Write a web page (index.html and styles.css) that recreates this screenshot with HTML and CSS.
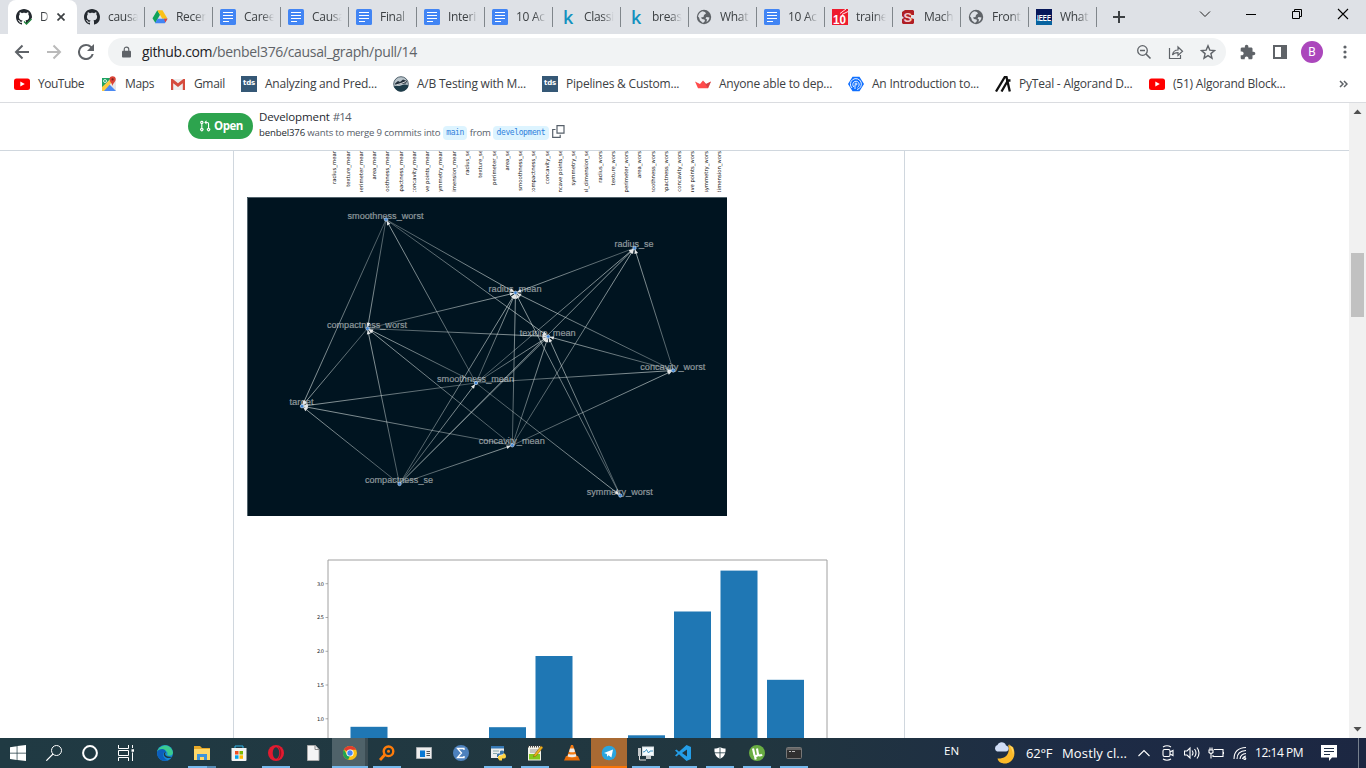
FILE: index.html
```html
<!DOCTYPE html>
<html lang="en">
<head>
<meta charset="utf-8">
<title>Development #14</title>
<link rel="stylesheet" href="styles.css">
</head>
<body>
<svg class="sprite" xmlns="http://www.w3.org/2000/svg">
  <symbol id="github" viewBox="0 0 16 16"><path fill="#24292f" d="M8 0C3.58 0 0 3.58 0 8c0 3.54 2.29 6.53 5.47 7.59.4.07.55-.17.55-.38 0-.19-.01-.82-.01-1.49-2.01.37-2.53-.49-2.69-.94-.09-.23-.48-.94-.82-1.13-.28-.15-.68-.52-.01-.53.63-.01 1.08.58 1.23.82.72 1.21 1.87.87 2.33.66.07-.52.28-.87.51-1.07-1.78-.2-3.64-.89-3.64-3.95 0-.87.31-1.59.82-2.15-.08-.2-.36-1.02.08-2.12 0 0 .67-.21 2.2.82.64-.18 1.32-.27 2-.27.68 0 1.36.09 2 .27 1.53-1.04 2.2-.82 2.2-.82.44 1.1.16 1.92.08 2.12.51.56.82 1.27.82 2.15 0 3.07-1.87 3.75-3.65 3.95.29.25.54.73.54 1.48 0 1.07-.01 1.93-.01 2.2 0 .21.15.46.55.38A8.013 8.013 0 0016 8c0-4.42-3.58-8-8-8z"/></symbol>
  <symbol id="drive" viewBox="0 0 16 16"><path fill="#10a35a" d="M5.3 1.2 8 5.8 3.4 14 .5 9.3z"/><path fill="#fbc116" d="M5.3 1.2h5.2l5 8.6h-5.2z"/><path fill="#4285f4" d="M5.6 9.8h9.9l-2.7 4.4H3z"/><path fill="#ea4335" d="M12 9.8h3.5l-2.2 3.7z"/></symbol>
  <symbol id="doc" viewBox="0 0 16 16"><rect width="16" height="16" rx="1.500" fill="#4285f4"/><path d="M3 3.500h10M3 6.500h10M3 9.500h10M3 12.500h6" stroke="#fff" stroke-width="1.200"/></symbol>
  <symbol id="globe" viewBox="0 0 16 16"><circle cx="8" cy="8" r="7.200" fill="#5f6368"/><path d="M2 7.500C2.500 5 4 3 6.500 2.200L9 3l1 1.500-2 1.500-.5 2-2.500.5 1 1.500 2.500.5L9 12l-2 2-3-2.500-1-3zM10.500 8l3 .5c-.3 2-1.500 3.500-3 4.500l.5-2.500-1.500-1z" fill="#dee1e6"/></symbol>
  <symbol id="youtube" viewBox="0 0 16 16"><rect y="2.500" width="16" height="11.500" rx="2.500" fill="#f00"/><path d="M6.300 5.500v5l4.500-2.500z" fill="#fff"/></symbol>
  <symbol id="maps" viewBox="0 0 16 16"><path d="M1 2h14v13H1z" fill="#e8e8e8"/><path d="M1 2h9L1 12z" fill="#1ea362"/><path d="M1 15 8 8l7 7z" fill="#4a89f3"/><path d="M1 11 10 3l2 2L3 15H1z" fill="#fcca3f"/><circle cx="4" cy="5" r="1.500" fill="none" stroke="#fff" stroke-width=".8"/><path d="M11.500 10C11 7 8.500 6 8.500 3.300a3.100 3.100 0 0 1 6.200 0C14.700 6 12 7 11.500 10z" fill="#db4437"/><circle cx="11.600" cy="3.400" r="1.100" fill="#7b231e"/></symbol>
  <symbol id="gmail" viewBox="0 0 16 16"><path d="M1 3h14v11H1z" fill="#eee"/><path d="M1 3v11h2.200V7.200L8 11l4.800-3.800V14H15V3h-1.700L8 7.200 2.700 3z" fill="#d54b3d"/></symbol>
  <symbol id="abtest" viewBox="0 0 16 16"><circle cx="8" cy="8" r="7.300" fill="#b9c4ca" stroke="#53646f"/><path d="M.8 10.500C4 9 5 11 8 9.500s5-1 7.500 0A7.600 7.600 0 0 1 1.800 12z" fill="#1d3c49"/><path d="M2 7.500 5 5l2 1 3-2.500 4 1.500-1 2.500-5 .5-5 1.500z" fill="#24313c"/><path d="m3 9 5-1.500 5-2" stroke="#fff" fill="none" stroke-width=".8"/></symbol>
  <symbol id="streamlit" viewBox="0 0 16 16"><path d="M0 5.500 5 8l3-3.500L11 8l5-2.500-3 6.800H3z" fill="#ff4b4b"/><path d="m8 4.500 3 3.500 5-2.500-3 6.800z" fill="#bd4043" opacity=".7"/></symbol>
  <symbol id="ocean" viewBox="0 0 16 16"><path d="M4.500.7h7L16 8l-4.500 7.300h-7L0 8z" fill="#0f6fff"/><g fill="none" stroke="#fff" stroke-width=".9"><path d="M4 12a5.500 5.500 0 1 1 5 1.500M6 11a3.200 3.200 0 1 1 3.500.3M7 13V9"/><circle cx="8" cy="8" r="1"/></g></symbol>
  <symbol id="algo" viewBox="0 0 16 16"><path d="M1 15.500 9.800 1h1.700l3.300 14.500M6.500 15.500 12 6M15.500 4.500H11" stroke="#111" stroke-width="2.300" fill="none"/></symbol>
</svg>

<header class="tabstrip">
  <div class="tab active"><svg class="fav"><use href="#github"/><path d="m7 12 3 3 6-6v7H7z" fill="#fff"/><path d="m8 12.500 2.500 2.500 5-5" stroke="#1a7f37" stroke-width="1.300" fill="none"/></svg><span>D</span><svg class="tabx" viewBox="0 0 8 8"><path d="m.5.5 7 7m0-7-7 7" stroke="#3c4043" stroke-width="1.700"/></svg></div>
  <div class="tab"><svg class="fav"><use href="#github"/></svg><span>causal</span></div>
  <div class="tab"><svg class="fav"><use href="#drive"/></svg><span>Recent</span></div>
  <div class="tab"><svg class="fav"><use href="#doc"/></svg><span>Caree</span></div>
  <div class="tab"><svg class="fav"><use href="#doc"/></svg><span>Causa</span></div>
  <div class="tab"><svg class="fav"><use href="#doc"/></svg><span>Final</span></div>
  <div class="tab"><svg class="fav"><use href="#doc"/></svg><span>Interi</span></div>
  <div class="tab"><svg class="fav"><use href="#doc"/></svg><span>10 Ac</span></div>
  <div class="tab"><i class="fav k">k</i><span>Classi</span></div>
  <div class="tab"><i class="fav k">k</i><span>breas</span></div>
  <div class="tab"><svg class="fav"><use href="#globe"/></svg><span>What</span></div>
  <div class="tab"><svg class="fav"><use href="#doc"/></svg><span>10 Ac</span></div>
  <div class="tab"><svg class="fav" viewBox="0 0 16 16"><rect width="16" height="16" fill="#ee1b2e"/><text x="1" y="14.500" class="ico-ten" textLength="13" lengthAdjust="spacingAndGlyphs">10</text><path d="M8 4.500 14 0M10 5.500l6-3" stroke="#fff" stroke-width=".9"/></svg><span>traine</span></div>
  <div class="tab"><svg class="fav" viewBox="0 0 16 16"><path d="M5 1h8l1 1v4h-3v3l3 1v4l-1 1H3l-1-1v-4l2-1-2-2V3z" fill="#b01e24"/><text x="3.500" y="13" class="ico-s">S</text></svg><span>Mach</span></div>
  <div class="tab"><svg class="fav"><use href="#globe"/></svg><span>Front</span></div>
  <div class="tab"><svg class="fav" viewBox="0 0 16 16"><rect width="16" height="16" fill="#06175a"/><path d="M0 16v-6l16 2v4z" fill="#0863a0"/><text x="1" y="11.500" class="ico-ieee" textLength="14" lengthAdjust="spacingAndGlyphs">IEEE</text></svg><span>What</span></div>
  <svg class="newtab" viewBox="0 0 12 12"><path d="M6 0v12M0 6h12" stroke="#3c4043" stroke-width="2"/></svg>
  <div class="winctl">
    <svg viewBox="0 0 46 28"><path d="m18 11.500 5 5 5-5" fill="none" stroke="#222"/></svg>
    <svg viewBox="0 0 46 28"><path d="M18 14.500h10" stroke="#000"/></svg>
    <svg viewBox="0 0 46 28"><path d="M18.500 11.500h7v7h-7zM20.500 11V9.500h7v7H26" fill="none" stroke="#000"/></svg>
    <svg viewBox="0 0 46 28"><path d="m18 9 10 10m0-10L18 19" stroke="#000" stroke-width="1.100"/></svg>
  </div>
</header>

<nav class="toolbar">
  <svg class="nav" viewBox="0 0 16 16"><path d="M15 8H2m6.500-6.500L2 8l6.500 6.500" fill="none" stroke="#5f6368" stroke-width="2"/></svg>
  <svg class="nav" viewBox="0 0 16 16"><path d="M1 8h13M7.500 1.500 14 8l-6.500 6.500" fill="none" stroke="#bababa" stroke-width="2"/></svg>
  <svg class="nav" viewBox="4 4 16 16"><path fill="#5f6368" d="M17.650 6.350A7.960 7.960 0 0 0 12 4a8 8 0 1 0 7.730 10h-2.080A6 6 0 1 1 12 6c1.660 0 3.140.69 4.220 1.780L13 11h7V4z"/></svg>
  <div class="omnibox">
    <svg class="lock" viewBox="0 0 10 12"><path d="M1 4.500h8q1 0 1 1V11q0 1-1 1H1q-1 0-1-1V5.500q0-1 1-1z" fill="#5f6368"/><path d="M2.500 5V3a2.500 2.500 0 0 1 5 0v2" fill="none" stroke="#5f6368" stroke-width="1.300"/></svg>
    <p class="url"><b>github.com</b>/benbel376/causal_graph/pull/14</p>
    <svg class="omi" viewBox="0 0 16 16"><circle cx="6.500" cy="6.500" r="4.800" fill="none" stroke="#5f6368" stroke-width="1.300"/><path d="M4 6.500h5M10 10l4.500 4.500" stroke="#5f6368" stroke-width="1.600"/></svg>
    <svg class="omi" viewBox="0 0 16 16"><path d="M1.500 4v10.500h11V11M4.500 11C5 7.500 7 6 10 6V3l4.500 4.200L10 11.400V8.700c-3 0-4.500.7-5.500 2.300z" fill="none" stroke="#5f6368" stroke-width="1.200"/></svg>
    <svg class="omi" viewBox="0 0 16 16"><path d="m8 1.800 1.800 4.300 4.700.4-3.600 3.100 1.100 4.600L8 11.700l-4 2.500 1.100-4.600-3.600-3.100 4.700-.4z" fill="none" stroke="#5f6368" stroke-width="1.400"/></svg>
  </div>
  <div class="actions">
    <svg viewBox="1 0 23 23"><path fill="#5f6368" d="M20.500 11H19V7c0-1.100-.9-2-2-2h-4V3.500C13 2.120 11.880 1 10.500 1S8 2.120 8 3.500V5H4c-1.100 0-1.990.9-1.990 2v3.800H3.500c1.490 0 2.700 1.210 2.700 2.700s-1.210 2.700-2.700 2.700H2V20c0 1.100.9 2 2 2h3.800v-1.500c0-1.490 1.210-2.700 2.700-2.700 1.490 0 2.700 1.210 2.700 2.700V22H17c1.100 0 2-.9 2-2v-4h1.500c1.380 0 2.500-1.120 2.500-2.500S21.880 11 20.500 11z"/></svg>
    <svg viewBox="0 0 16 16"><path d="M2 2h12v12H2z" fill="none" stroke="#5f6368" stroke-width="2"/><path d="M9 2h5v12H9z" fill="#5f6368"/></svg>
    <div class="avatar">B</div>
    <svg viewBox="0 0 16 16" fill="#5f6368"><circle cx="8" cy="3" r="1.600"/><circle cx="8" cy="8" r="1.600"/><circle cx="8" cy="13" r="1.600"/></svg>
  </div>
</nav>

<nav class="bookmarks">
  <a class="tight"><svg class="fav"><use href="#youtube"/></svg>YouTube</a>
  <a><svg class="fav"><use href="#maps"/></svg>Maps</a>
  <a><svg class="fav"><use href="#gmail"/></svg>Gmail</a>
  <a><i class="fav tds">tds</i>Analyzing and Pred...</a>
  <a><svg class="fav"><use href="#abtest"/></svg>A/B Testing with M...</a>
  <a><i class="fav tds">tds</i>Pipelines &amp; Custom...</a>
  <a><svg class="fav"><use href="#streamlit"/></svg>Anyone able to dep...</a>
  <a><svg class="fav"><use href="#ocean"/></svg>An Introduction to...</a>
  <a><svg class="fav"><use href="#algo"/></svg>PyTeal - Algorand D...</a>
  <a><svg class="fav"><use href="#youtube"/></svg>(51) Algorand Block...</a>
  <svg class="more" viewBox="0 0 9 8"><path d="m1 1 3 3-3 3m4-6 3 3-3 3" fill="none" stroke="#5f6368" stroke-width="1.500"/></svg>
</nav>

<div class="viewport">
  <main class="page">
    <section class="pr">
      <span class="state"><svg viewBox="0 0 16 16"><path fill="#fff" d="M7.177 3.073L9.573.677A.25.25 0 0110 .854v4.792a.25.25 0 01-.427.177L7.177 3.427a.25.25 0 010-.354zM3.750 2.500a.75.75 0 100 1.500.75.75 0 000-1.500zm-2.250.75a2.250 2.250 0 113 2.122v5.256a2.251 2.251 0 11-1.500 0V5.372A2.250 2.250 0 011.500 3.250zM11 2.500h-1V4h1a1 1 0 011 1v5.628a2.251 2.251 0 101.500 0V5A2.500 2.500 0 0011 2.500zm1 10.250a.75.75 0 111.500 0 .75.75 0 01-1.500 0zM3.750 12a.75.75 0 100 1.500.75.75 0 000-1.500z"/></svg>Open</span>
      <div class="pr-text">
        <h1>Development <span>#14</span></h1>
        <p><b>benbel376</b> wants to merge 9 commits into <code>main</code> from <code>development</code><svg class="copy" viewBox="0 0 13 13"><path d="M5 .7h7v7.500H5zM3.500 4.500H.7v7.800h7.500v-2.500" fill="none" stroke="#57606a" stroke-width="1.200"/></svg></p>
      </div>
    </section>
    <section class="comment">
      <svg class="heat" id="heat" viewBox="247 151 480 41"></svg>
      <svg class="graph" id="graph" viewBox="247 197 480 319"></svg>
      <svg class="chart" id="chart" viewBox="247 550 600 188"></svg>
    </section>
  </main>
  <aside class="scroll"><svg viewBox="0 0 17 17"><path d="m4.500 11 4-4.500 4 4.500z" fill="#505050"/></svg><i></i><svg viewBox="0 0 17 17"><path d="m4.500 6 4 4.500 4-4.500z" fill="#505050"/></svg></aside>
</div>

<footer class="taskbar">
  <div class="sys">
    <svg viewBox="0 0 16 16" fill="#fff"><path d="m0 2.200 6.700-1v6.500H0zM7.400 1.100 16 0v7.700H7.400zM0 8.400h6.700v6.500l-6.700-1zM7.400 8.400H16V16l-8.600-1.100z"/></svg>
    <svg viewBox="0 0 16 16" fill="none" stroke="#fff"><circle cx="10.500" cy="5.500" r="5"/><path d="M7 9 .3 15.700" stroke-width="1.200"/></svg>
    <svg viewBox="0 0 16 16"><circle cx="8" cy="8" r="6.900" fill="none" stroke="#fff" stroke-width="2"/></svg>
    <svg viewBox="0 0 16 16" fill="none" stroke="#fff"><path d="M.5 0v3.500h10V0M.5 16v-3.500h10V16M.5 5.500h10v5H.5zM14.500 0v3M14.500 7.500V16"/><path d="M13.500 5.500h2.500" stroke-width="2.500"/></svg>
  </div>
  <div class="apps">
    <div><svg viewBox="0 0 16 16"><circle cx="8" cy="8" r="8" fill="#1689d8"/><path d="M.2 6.500C2-.5 14-3 16 7.500c0 3.500-4.500 4-6 2.500 2-3-2-7-9.800-3.500z" fill="#3acb91"/><path d="M.2 6.500C3 3 8.500 3.500 9 7 5 6.500 4.500 13 11 15.400 4 17.500-.6 12 .2 6.500z" fill="#0c5ebc"/><path d="M9 7c-2 2-1 5 6 5-1 1-6 2.200-8-1.500C6 8 8 6.500 9 7z" fill="#203a43"/></svg></div>
    <div class="on wide"><svg viewBox="0 0 16 16"><path d="M0 1h6l2 2h8v12H0z" fill="#e7a928"/><path d="M0 4h16v11H0z" fill="#ffd868"/><path d="M3 15V9h10v6h-3v-3H6v3z" fill="#3f94da"/></svg></div>
    <div><svg viewBox="0 0 16 16"><path d="M4 4V1h8v3" fill="none" stroke="#32b5e8"/><path d="M.5 3h15v12q0 1-1 1h-13q-1 0-1-1z" fill="#f3f3f3"/><path d="M4 6h3.500v3.500H4z" fill="#f04f23"/><path d="M8.500 6H12v3.500H8.500z" fill="#7eb900"/><path d="M4 10.300h3.500v3.500H4z" fill="#00a3ee"/><path d="M8.500 10.300H12v3.500H8.500z" fill="#ffb800"/></svg></div>
    <div class="on"><svg viewBox="0 0 16 16"><circle cx="8" cy="8" r="8" fill="#e21b30"/><ellipse cx="8" cy="8" rx="3.300" ry="5.800" fill="#203a43"/><path d="M10 1.500a8 8 0 0 1 0 13 12 12 0 0 0 0-13z" fill="#a20d20"/></svg></div>
    <div><svg viewBox="0 0 16 16"><path d="M2.500.5h8l3.500 4v11H2.500z" fill="#f5f5f5" stroke="#aaa"/><path d="M10 .5v4h4" fill="none" stroke="#888"/></svg></div>
    <div class="on current"><svg viewBox="0 0 16 16"><circle cx="8" cy="8" r="7" fill="#fbc116"/><path d="M8 8 1.900 4.600A7 7 0 0 1 14.200 4.700H8z" fill="#e33b2e"/><path d="M1.900 4.600 5 10l3 1-2 3.800A7 7 0 0 1 1.900 4.600z" fill="#1fa352"/><circle cx="8" cy="8" r="3.600" fill="#fff"/><circle cx="8" cy="8" r="2.700" fill="#4285f4"/></svg></div>
    <div class="on"><svg viewBox="0 0 16 16"><g fill="none" stroke="#ff7c0a"><circle cx="9.500" cy="6.300" r="4.800" stroke-width="2.400"/><path d="m6 9.500-5 5.500" stroke-width="2.800"/></g><circle cx="9.500" cy="6.300" r="1.500" fill="#ff7c0a"/></svg></div>
    <div><svg viewBox="0 0 16 16"><path d="M.5 2.500h15v11H.5z" fill="#eee" stroke="#a9afb3"/><path d="M4 5.500h5v6.500H4z" fill="#0878d4"/><path d="M10.500 6.500h3.500m-3.500 2h3.500m-3.500 2h3.500" stroke="#555"/></svg></div>
    <div><svg viewBox="0 0 16 16"><circle cx="8" cy="8" r="8" fill="#4d81bd"/><path d="M11 5V3.500H4.500L8.500 8l-4 4.500H11V11" fill="none" stroke="#fff" stroke-width="1.300"/></svg></div>
    <div class="on"><svg viewBox="0 0 16 16"><path d="M1 1h13v12H1z" fill="#eee"/><path d="M1 1h13v2.500H1z" fill="#3678b4"/><path d="M3 6h6M3 8.500h4" stroke="#8aa"/><path d="M7 12V9.500q0-1 1-1h2V6.500q0-1 2-1t2 1V9l-5 1v2z" fill="#3a75aa"/><path d="M8 13.500V11l5-1V8.500h1.500q1.500 1 1.500 3T14 13.500h-2v2H9.500z" fill="#ffd343"/></svg></div>
    <div class="on"><svg viewBox="0 0 16 16"><path d="M1 1h13v14.500H1z" fill="#f2f2e9"/><path d="M2 9h11v5.500H2z" fill="#85c91e"/><path d="M1 1.500h13" stroke="#444" stroke-dasharray="1 1" stroke-width="2"/><path d="M3 5h8m-8 2h7" stroke="#999"/><path d="m7 10 7-9 2 1.500L9 11l-2.500 1z" fill="#f1b31e" stroke="#875f1b" stroke-width=".6"/></svg></div>
    <div><svg viewBox="0 0 16 16"><path d="M2 11h12l2 4.500H0z" fill="#e66b08"/><path d="M7 0h2l4 12q-5 2-10 0z" fill="#f37b13"/><path d="m6 3.500-1 3.200q3 1 6 0L10 3.500zM4.400 9l-.8 2.500q4.400 1.500 8.800 0L11.600 9q-3.600 1.200-7.200 0z" fill="#eee"/></svg></div>
    <div class="on alert"><svg viewBox="0 0 16 16"><circle cx="8" cy="8" r="7.300" fill="#2ba5de"/><path d="m3 8 9-3.600-1.600 8L7.500 10.200l-1.400 1.500-.2-2.700z" fill="#fff"/></svg></div>
    <div class="on"><svg viewBox="0 0 16 16"><path d="M4 1.500h12v9.500H4z" fill="#d7dde0"/><path d="M5 2.500h10v7.500H5z" fill="#f4fbfe"/><path d="m5 7 2-.5 1.500-2 2 3.500L12 6h3" fill="none" stroke="#197db4" stroke-width=".8"/><path d="M0 3h3v8H0zM8 11h5v3H8z" fill="#c3c7c9"/><path d="M1.500 11v4H8" fill="none" stroke="#ddd"/></svg></div>
    <div class="on"><svg viewBox="0 0 16 16"><path d="M11.500 0 16 2v12l-4.500 2L4 9.300 1.500 11.500 0 10.500 2.700 8 0 5.500l1.500-1L4 6.700zM12 4.500 7 8l5 3.500z" fill="#249ee8"/></svg></div>
    <div class="on"><svg viewBox="0 0 16 16"><path d="M8 2c2 1.300 3.500 1.600 5.500 1.600C14 9 12 12 8 14 4 12 2 9 2.500 3.600 4.500 3.600 6 3.300 8 2z" fill="#fff"/><path d="M8 2v12M2 7.800h12" stroke="#203a43" stroke-width=".8"/></svg></div>
    <div class="on"><svg viewBox="0 0 16 16"><circle cx="8" cy="8" r="8" fill="#69ad43"/><path d="m4 3.500 1.300 6c.5 2.500 4 2 3.500-1L8 3.500m1 5.500c.5 2 2.500 2 4 .5M6 11l.7 3.500" fill="none" stroke="#fff" stroke-width="2.100"/></svg></div>
    <div class="on"><svg viewBox="0 0 16 16"><rect x=".5" y="2.500" width="15" height="11" rx="1" fill="#303030" stroke="#777"/><path d="M1 3h14v2H1z" fill="#666"/><path d="M3 6.500h2m1 0h3" stroke="#bbb"/></svg></div>
  </div>
  <div class="tray">
    <span class="lang">EN</span>
    <svg class="moon" viewBox="0 0 22 22"><path d="M19 5c4 9-1 16.500-8 16.500-4 0-7-2-7.500-5C10 17 17 13 14 3z" fill="#fcb928"/><path d="M14.500 2c5 3 6 7 4.500 11 0-4-2-8-4.500-11z" fill="#ffd967"/><path d="M3 9.500a3.500 3.500 0 0 1 .5-6.500C5-1 11-.5 12 3.500c4 1 3 6 0 6z" fill="#cfdcf5"/></svg>
    <span class="temp">62°F</span><span class="sky">Mostly cl...</span>
    <svg class="ti" viewBox="0 0 16 16"><path d="m2.500 11 5.500-5.500 5.500 5.500"/></svg>
    <svg class="ti" viewBox="0 0 16 16"><rect x="3" y="4.500" width="7" height="7" rx="1.500"/><path d="m10 7 3-1.500v5L10 9M3 2Q7-.5 11 2M3 14q4 2.500 8 0"/></svg>
    <svg class="ti" viewBox="0 0 16 16"><path d="M.5 6v4H3l3 3V3L3 6zM8 5.500q2 2.500 0 5M10.500 4q3 4 0 8M13 2.500q4 5.500 0 11"/></svg>
    <svg class="ti" viewBox="0 0 16 16"><path d="M6 4.500h9v7H5V10M15.500 7v2M1 5h4v2.500q-2 2-4 0zM2 5V2.500M4 5V2.500M3 9v4.500"/></svg>
    <svg class="ti" viewBox="0 0 16 16"><path d="M2 14Q2 3 14 2.500M5 14q0-8 9-8.500M8 14q.5-5 6-5.500M10.500 14q.5-2.500 3.500-3"/><circle cx="12.800" cy="13.500" r="1"/></svg>
    <span class="clock">12:14 PM</span>
    <svg class="note" viewBox="0 0 16 16"><path d="M0 0h16v12.500h-5L8 16v-3.500H0z" fill="#fff"/><path d="M3 3.500h10m-10 3h10m-10 3h6" stroke="#1d2d44"/></svg>
    <i class="peek"></i>
  </div>
</footer>
<script src="figures.js"></script>
</body>
</html>
```

FILE: styles.css
```css
* { box-sizing: border-box; }
body { margin: 0; width: 1366px; height: 768px; overflow: hidden; display: flex; flex-direction: column; font: 12px/16px "Open Sans", "Noto Sans", sans-serif; color: #3c4043; background: #fff; }
svg { display: block; flex: none; }
.sprite { width: 0; height: 0; position: absolute; }
.fav { width: 16px; height: 16px; flex: none; }
.k { font: 600 18px/16px "Open Sans", sans-serif; color: #1391bf; padding-left: 3px; }
.tds { font: bold 7px/15px "DejaVu Sans", sans-serif; letter-spacing: -.2px; color: #fff; background: #355876; text-align: center; }
.ico-ten { font: bold 13px "Liberation Sans", sans-serif; fill: #fff; }
.ico-s { font: bold 13px "Liberation Sans", sans-serif; fill: #f3c9cb; }
.ico-ieee { font: bold 9px "Liberation Sans", sans-serif; fill: #fff; }

.tabstrip { height: 34px; flex: none; background: #dee1e6; display: flex; align-items: stretch; padding-left: 8px; }
.tab { width: 68px; display: flex; align-items: center; padding-left: 7px; gap: 8px; position: relative; }
.tab span { flex: 1; overflow: hidden; white-space: nowrap; letter-spacing: -.3px; margin-right: 7px; -webkit-mask-image: linear-gradient(90deg, #000 60%, transparent); mask-image: linear-gradient(90deg, #000 60%, transparent); }
.tab::after { content: ""; position: absolute; right: 0; top: 7px; width: 1px; height: 20px; background: #80868b; }
.tab.active { width: 69px; background: #fff; border-radius: 8px 8px 0 0; padding-left: 8px; }
.tab.active span { flex: none; width: 9px; margin: 0; }
.tab.active::after, .tab:nth-child(1)::after { display: none; }
.tabx { width: 8px; height: 8px; }
.newtab { width: 12px; height: 12px; margin: 11px 0 0 16px; }
.winctl { display: flex; margin-left: auto; }
.winctl svg { width: 46px; height: 28px; }

.toolbar { height: 36px; flex: none; display: flex; align-items: center; padding-left: 14px; }
.nav { width: 16px; height: 16px; margin-right: 16px; }
.omnibox { width: 1118px; height: 28px; margin-left: -2px; border-radius: 14px; background: #f1f3f4; display: flex; align-items: center; padding: 0 10px 0 14px; }
.lock { width: 9px; height: 12px; }
.url { flex: 1; margin: 0 0 0 11px; font-size: 14px; letter-spacing: -.34px; color: #5f6368; }
.url b { font-weight: 400; color: #202124; }
.omi { width: 16px; height: 16px; margin-left: 16px; }
.omi:nth-of-type(2) { margin-left: 0; }
.actions { flex: 1; display: grid; grid-template-columns: 32px 32px 32px 34px; justify-items: center; align-items: center; padding-left: 6px; }
.actions svg { width: 16px; height: 16px; }
.avatar { width: 22px; height: 22px; border-radius: 50%; background: #ab47bc; color: #fff; text-align: center; line-height: 22px; font-family: Roboto, sans-serif; }

.bookmarks { height: 33px; flex: none; border-bottom: 1px solid #dadce0; display: grid; grid-template-columns: 87px 69px 71px 152px 149px 153px 153px 147px 154px 190px auto; padding: 0 0 4px 14px; align-items: center; }
.bookmarks a { display: flex; gap: 8px; align-items: center; white-space: nowrap; letter-spacing: -.22px; }
.bookmarks .tight { letter-spacing: -.48px; }
.bookmarks a:nth-child(2), .bookmarks a:nth-child(3) { letter-spacing: -.35px; }
.more { width: 9px; height: 8px; }

.viewport { height: 635px; flex: none; display: flex; overflow: hidden; }
.page { flex: 1; overflow: hidden; }
.scroll { width: 17px; background: #f1f1f1; display: flex; flex-direction: column; }
.scroll svg { width: 17px; height: 17px; }
.scroll i { width: 13px; height: 64px; background: #c1c1c1; margin: 133px 0 auto 2px; }
.pr { height: 48px; border-bottom: 1px solid #d0d7de; display: flex; padding: 7px 0 0 188px; }
.state { width: 65px; height: 26px; margin-top: 3px; border-radius: 13px; background: #2da44e; color: #fff; font-weight: 700; font-size: 11.500px; letter-spacing: -.45px; display: flex; align-items: center; gap: 3px; padding-left: 11px; }
.state svg { width: 12px; height: 12px; }
.pr-text { margin-left: 6px; white-space: nowrap; }
.pr-text h1 { margin: 0; font-size: 11.500px; line-height: 14px; letter-spacing: -.12px; font-weight: 400; color: #24292f; }
.pr-text h1 span { color: #57606a; letter-spacing: -.9px; }
.pr-text p { margin: 1px 0 0; display: flex; align-items: center; font-size: 9.600px; line-height: 16px; letter-spacing: -.19px; color: #57606a; white-space: pre; }
.pr-text b { font-weight: 500; letter-spacing: -.14px; color: #24292f; }
.pr-text code { font: 8px/14px "DejaVu Sans Mono", monospace; letter-spacing: -.4px; background: #ddf4ff; color: #2f81dc; border-radius: 4px; padding: 0 3.500px; }
.copy { width: 13px; height: 13px; margin-left: 3px; margin-bottom: 3px; }
.comment { width: 672px; height: 587px; margin-left: 233px; border: solid #d0d7de; border-width: 0 1px; padding-left: 13px; overflow: hidden; }
.heat { width: 480px; height: 41px; margin-bottom: 5px; font: 5.300px "DejaVu Sans", sans-serif; fill: #111; }
.graph { width: 480px; height: 319px; background: #001420; font: 8.300px "Liberation Sans", sans-serif; }
.graph text { fill: #8d979b; stroke: #8d979b; stroke-width: .2px; text-anchor: middle; }
.chart { width: 600px; height: 188px; margin-top: 34px; font: 5px "DejaVu Sans", sans-serif; }

.taskbar { height: 30px; flex: none; display: flex; background: linear-gradient(90deg, #203a43, #21363f 55%, #1d2b45 80%, #1c2742); color: #fff; }
.sys { width: 147px; display: grid; grid-template-columns: 36px 36px 36px 35px; justify-items: center; align-items: center; }
.sys svg { width: 16px; height: 16px; }
.apps { display: flex; width: 666px; }
.apps div { width: 37px; display: grid; place-items: center; position: relative; padding-right: 1px; }
.apps svg { width: 16px; height: 16px; }
.apps .on::after { content: ""; position: absolute; left: 4px; bottom: 0; width: 28px; height: 2px; background: #76b9ed; }
.apps .wide::after { background: linear-gradient(90deg, #76b9ed 19px, #568bb4 19px); }
.apps .current { background: linear-gradient(90deg, #4f6269 33px, #3b4c53 33px 36px, transparent 36px); }
.apps .current::after { left: 0; width: 36px; }
.apps .alert { background: linear-gradient(90deg, #a96a33 36px, transparent 36px); }
.apps .alert::after { left: 0; width: 36px; background: #f77408; }
.tray { flex: 1; display: grid; grid-template-columns: 50px 32px 36px 74px 24px 24px 24px 24px 23px 66px 37px 2px; padding-left: 131px; align-items: center; white-space: nowrap; }
.lang { font-size: 11.500px; padding-bottom: 5px; }
.moon { width: 22px; height: 22px; }
.temp { font-size: 13px; letter-spacing: -.2px; }
.sky { font-size: 13px; letter-spacing: .15px; }
.ti { width: 16px; height: 16px; fill: none; stroke: #fff; stroke-width: 1.100; }
.clock { font-size: 12px; letter-spacing: -.45px; }
.note { width: 16px; height: 16px; }
.peek { height: 30px; width: 1px; background: #76808d; }
```

FILE: figures.js
```js
const NS = "http://www.w3.org/2000/svg";
function add(parent, tag, attrs, text) {
  const el = document.createElementNS(NS, tag);
  for (const k in attrs) el.setAttribute(k, attrs[k]);
  if (text) el.textContent = text;
  parent.appendChild(el);
  return el;
}

/* Column labels under the correlation heat map */
const base = ["radius", "texture", "perimeter", "area", "smoothness", "compactness", "concavity", "concave points", "symmetry", "fractal_dimension"];
const heat = document.getElementById("heat");
["mean", "se", "worst"].forEach((suffix, g) => base.forEach((name, i) => {
  const x = 336.4 + 13.26 * (g * 10 + i);
  add(heat, "text", { transform: `translate(${x} ${suffix === "worst" ? 149 : 150}) rotate(-90)`, "text-anchor": "end" }, name + "_" + suffix);
}));

/* Causal graph: x, y of the node and width of its label */
const nodes = {
  smoothness_worst: [386, 219.5, 76], compactness_worst: [367.5, 328.5, 80], target: [302, 406.2, 24],
  compactness_se: [399.5, 484, 68], smoothness_mean: [476, 383, 77], concavity_mean: [512.3, 445.3, 66],
  radius_mean: [515.5, 292.8, 53], texture_mean: [548.2, 336.5, 56], radius_se: [634.5, 248, 39],
  concavity_worst: [673.3, 370.5, 65], symmetry_worst: [620.3, 495.5, 66]
};
const edges = {
  smoothness_worst: ["compactness_worst", "target", "radius_mean", "texture_mean"],
  compactness_worst: ["target", "radius_mean", "texture_mean"],
  smoothness_mean: ["smoothness_worst", "compactness_worst", "target", "radius_mean", "texture_mean", "radius_se", "concavity_worst", "symmetry_worst"],
  concavity_mean: ["compactness_worst", "target", "radius_mean", "texture_mean", "radius_se", "concavity_worst"],
  compactness_se: ["compactness_worst", "target", "smoothness_mean", "radius_mean", "texture_mean", "concavity_mean", "radius_se"],
  radius_se: ["radius_mean"],
  concavity_worst: ["radius_mean", "texture_mean", "radius_se"],
  symmetry_worst: ["radius_mean", "texture_mean"]
};
const graph = document.getElementById("graph");
add(graph, "path", { d: "M247.500 516V197.500H727", fill: "none", stroke: "#53646d" });
for (const name in nodes) {
  const [x, y, w] = nodes[name];
  add(graph, "text", { x: x - 0.5, y: y - 1, textLength: w, lengthAdjust: "spacingAndGlyphs" }, name);
}
let n = 0;
for (const from in edges) for (const to of edges[from]) {
  const [x1, y1] = nodes[from], [x2, y2] = nodes[to];
  const id = "e" + n++;
  const g = add(graph, "linearGradient", { id, gradientUnits: "userSpaceOnUse", x1, y1, x2, y2 });
  add(g, "stop", { offset: 0, "stop-color": "#dfe8e6", "stop-opacity": 0.36 });
  add(g, "stop", { offset: 1, "stop-color": "#dfe8e6", "stop-opacity": 0.7 });
  add(graph, "line", { x1, y1, x2, y2, stroke: `url(#${id})`, "stroke-width": 0.9 });
  const a = Math.atan2(y2 - y1, x2 - x1) * 180 / Math.PI;
  add(graph, "path", { d: "M-1.500 0-5.800-1.900V1.900z", fill: "#e4e6e6", transform: `translate(${x2} ${y2}) rotate(${a})` });
}
for (const name in nodes) add(graph, "circle", { cx: nodes[name][0], cy: nodes[name][1], r: 1.7, fill: "#3e85d6", stroke: "#c4d7ea", "stroke-width": 0.7 });

/* Bar chart: left edge and top of each bar */
const chart = document.getElementById("chart");
[[350.5, 726.8], [489, 727.2], [535.5, 656], [628, 735.3], [674, 611.5], [720.5, 570.6], [767, 679.8]].forEach(([x, y]) =>
  add(chart, "rect", { x, y, width: 37, height: 800 - y, fill: "#1f77b4" }));
add(chart, "path", { d: "M328 740V560H827V740", fill: "none", stroke: "#a0a0a0" });
[["3.0", 583.7], ["2.5", 617.5], ["2.0", 651.3], ["1.5", 685], ["1.0", 718.8]].forEach(([t, y]) => {
  add(chart, "text", { x: 324, y: y + 1.9, "text-anchor": "end", fill: "#222", textLength: 7 }, t);
  add(chart, "path", { d: `M325.500 ${y}h2.500`, stroke: "#888", "stroke-width": 0.7 });
});
```
